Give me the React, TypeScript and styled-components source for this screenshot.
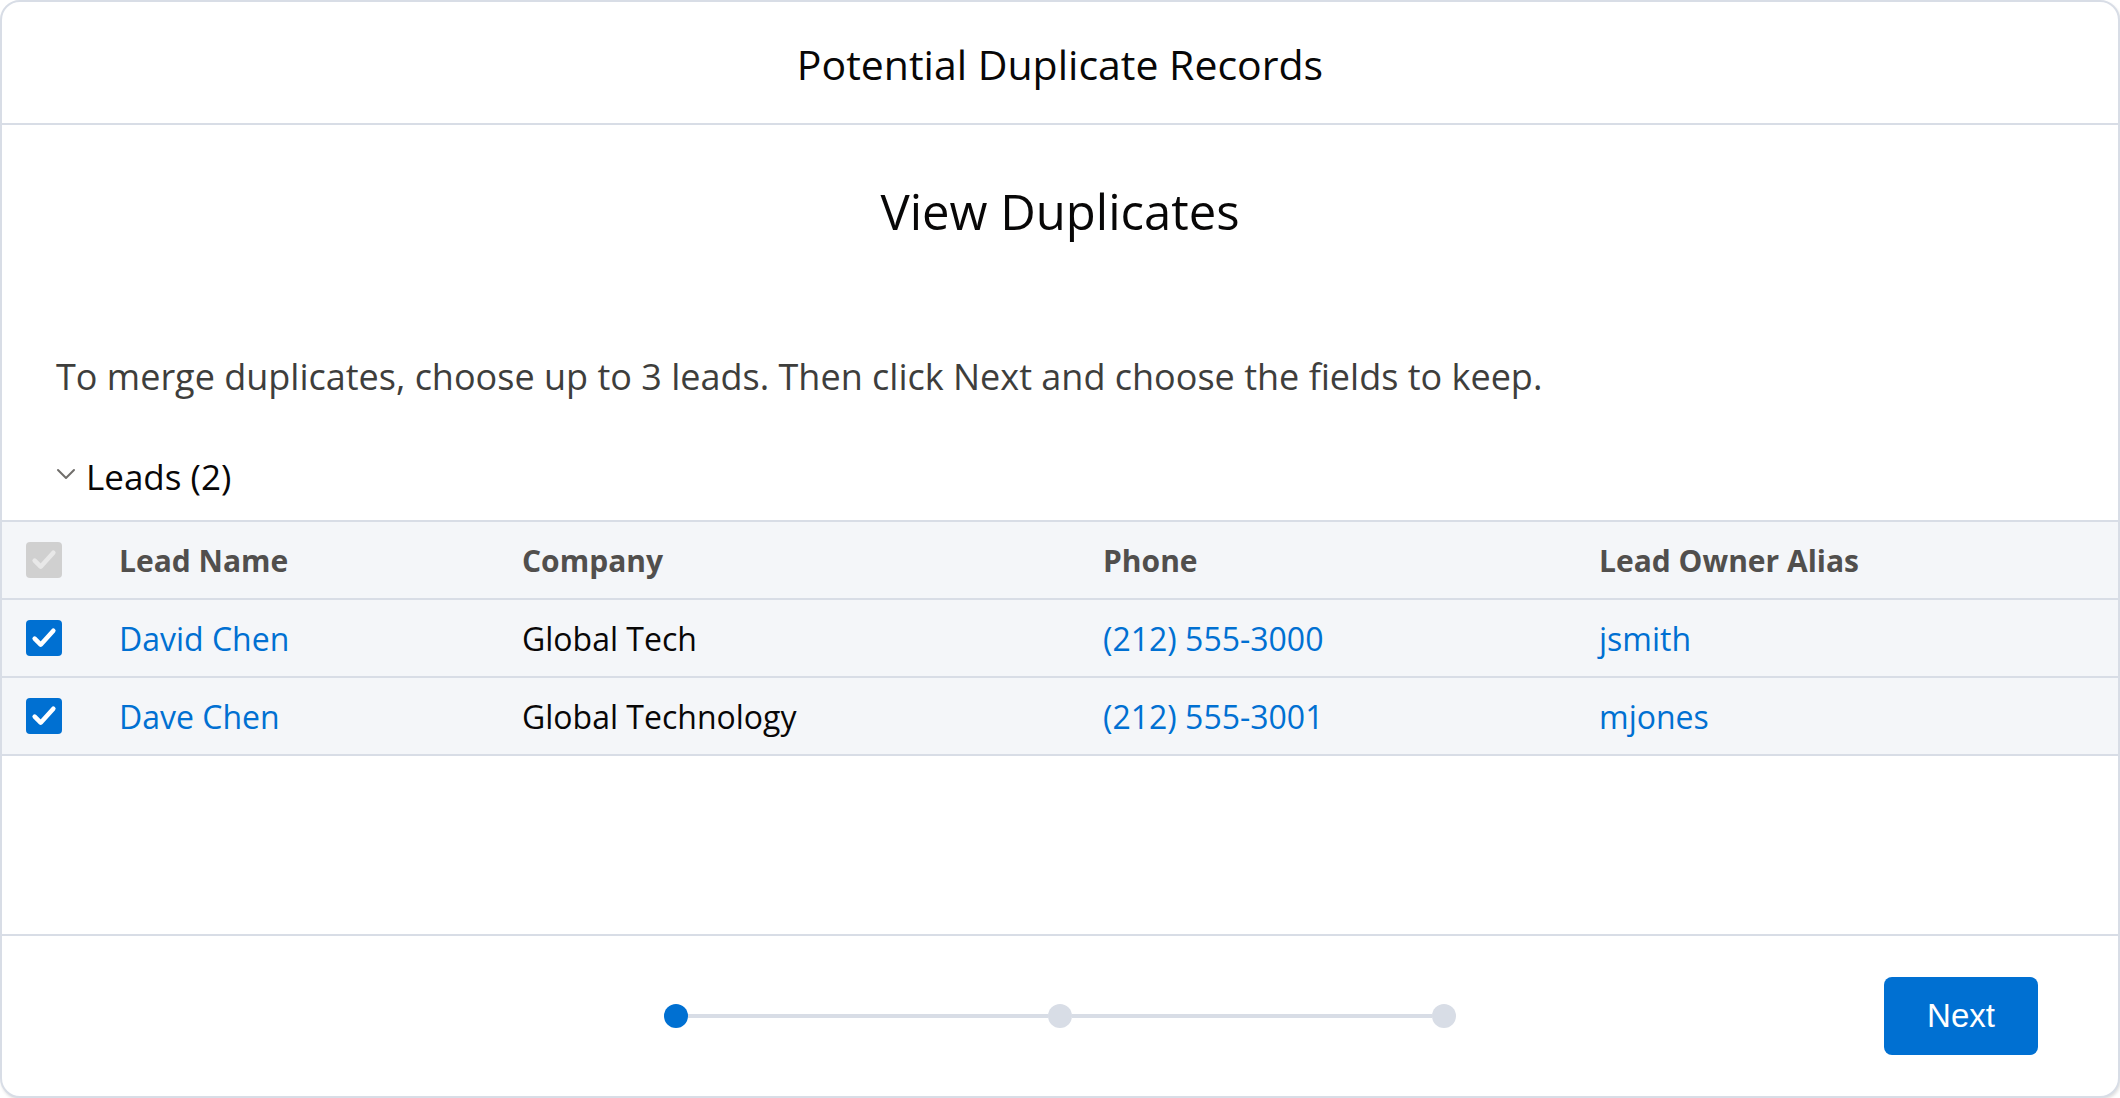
import React, { useState } from "react"
import styled, { createGlobalStyle } from "styled-components"

const Colors = {
  border: "#d8dde6",
  tableBg: "#f4f6f9",
  brand: "#0070d2",
  text: "#080707",
  weak: "#3e3e3c",
  header: "#514f4d",
}

const GlobalStyle = createGlobalStyle`
  html, body {
    margin: 0;
    padding: 0;
    background: #fff;
  }
  body {
    font-family: "Open Sans", "Noto Sans", sans-serif;
    color: ${Colors.text};
  }
  * {
    box-sizing: border-box;
  }
`

type Lead = {
  id: number
  name: string
  company: string
  phone: string
  owner: string
}

const leads: Lead[] = [
  { id: 1, name: "David Chen", company: "Global Tech", phone: "(212) 555-3000", owner: "jsmith" },
  { id: 2, name: "Dave Chen", company: "Global Technology", phone: "(212) 555-3001", owner: "mjones" },
]

const CheckIcon = () => (
  <svg width="24" height="24" viewBox="0 0 24 24" fill="none">
    <path d="M5 12.5l4.5 4.5L19 6.5" stroke="currentColor" strokeWidth="3.4" strokeLinecap="round" strokeLinejoin="round" />
  </svg>
)

const ChevronDown = () => (
  <svg width="20" height="12" viewBox="0 0 20 12" fill="none">
    <path d="M2 2l8 8 8-8" stroke="#706e6b" strokeWidth="2" strokeLinecap="round" strokeLinejoin="round" />
  </svg>
)

const App: React.FC = () => {
  const [selected, setSelected] = useState<number[]>([1, 2])
  const [open, setOpen] = useState(true)

  const toggle = (id: number) => {
    setSelected((prev) => (prev.includes(id) ? prev.filter((x) => x !== id) : [...prev, id]))
  }

  return (
    <>
      <GlobalStyle />
      <S.Card>
        <S.Header>
          <S.Title>Potential Duplicate Records</S.Title>
        </S.Header>
        <S.Body>
          <S.Heading>View Duplicates</S.Heading>
          <S.Description>
            To merge duplicates, choose up to 3 leads. Then click Next and choose the fields to keep.
          </S.Description>
          <S.SectionToggle onClick={() => setOpen(!open)}>
            <ChevronDown />
            <span>Leads (2)</span>
          </S.SectionToggle>
          {open && (
            <S.Table>
              <S.Row>
                <S.CheckCell>
                  <S.Checkbox variant="disabled">
                    <CheckIcon />
                  </S.Checkbox>
                </S.CheckCell>
                <S.HeadCell>Lead Name</S.HeadCell>
                <S.HeadCell>Company</S.HeadCell>
                <S.HeadCell>Phone</S.HeadCell>
                <S.HeadCell>Lead Owner Alias</S.HeadCell>
              </S.Row>
              {leads.map((lead) => (
                <S.Row key={lead.id}>
                  <S.CheckCell>
                    <S.Checkbox
                      variant={selected.includes(lead.id) ? "checked" : "empty"}
                      onClick={() => toggle(lead.id)}
                    >
                      {selected.includes(lead.id) && <CheckIcon />}
                    </S.Checkbox>
                  </S.CheckCell>
                  <S.Cell link>{lead.name}</S.Cell>
                  <S.Cell>{lead.company}</S.Cell>
                  <S.Cell link>{lead.phone}</S.Cell>
                  <S.Cell link>{lead.owner}</S.Cell>
                </S.Row>
              ))}
            </S.Table>
          )}
        </S.Body>
        <S.Footer>
          <S.Progress>
            <S.Dot active />
            <S.Track />
            <S.Dot />
            <S.Track />
            <S.Dot />
          </S.Progress>
          <S.NextButton>Next</S.NextButton>
        </S.Footer>
      </S.Card>
    </>
  )
}

const S = {
  Card: styled.div`
    display: flex;
    flex-direction: column;
    width: 100%;
    height: 100vh;
    border: 2px solid ${Colors.border};
    border-radius: 20px;
    background: #fff;
    box-shadow: 1px 2px 3px rgba(0, 0, 0, 0.12);
    overflow: hidden;
  `,
  Header: styled.div`
    display: flex;
    align-items: center;
    justify-content: center;
    height: 123px;
    flex-shrink: 0;
    padding-top: 4px;
    border-bottom: 2px solid ${Colors.border};
  `,
  Title: styled.h1`
    margin: 0;
    font-size: 41px;
    font-weight: 400;
    line-height: 1.2;
  `,
  Body: styled.div`
    flex: 1;
    display: flex;
    flex-direction: column;
    padding-top: 56px;
  `,
  Heading: styled.h2`
    margin: 0;
    text-align: center;
    font-size: 49px;
    font-weight: 400;
    line-height: 60px;
  `,
  Description: styled.p`
    margin: 112px 0 0;
    padding: 0 54px;
    font-size: 36px;
    line-height: 48px;
    color: ${Colors.weak};
  `,
  SectionToggle: styled.div`
    display: flex;
    align-items: center;
    gap: 10px;
    margin-top: 52px;
    padding: 0 54px;
    height: 48px;
    font-size: 35px;
    line-height: 48px;
    cursor: pointer;
    svg {
      margin-top: -6px;
    }
  `,
  Table: styled.div`
    margin-top: 19px;
    background: ${Colors.tableBg};
    border-top: 2px solid ${Colors.border};
  `,
  Row: styled.div`
    display: grid;
    grid-template-columns: 91px 403px 581px 496px 1fr;
    align-items: center;
    height: 78px;
    border-bottom: 2px solid ${Colors.border};
  `,
  CheckCell: styled.div`
    display: flex;
    align-items: center;
    padding-left: 24px;
  `,
  Checkbox: styled.div<{ variant: "checked" | "empty" | "disabled" }>`
    display: flex;
    align-items: center;
    justify-content: center;
    width: 36px;
    height: 36px;
    border-radius: 4px;
    cursor: pointer;
    color: ${({ variant }) => (variant === "disabled" ? "#e8e8e8" : "#fff")};
    background: ${({ variant }) =>
      variant === "checked" ? Colors.brand : variant === "disabled" ? "#d0d0d0" : "#fff"};
    border: ${({ variant }) => (variant === "empty" ? `2px solid ${Colors.border}` : "none")};
    svg {
      width: 32px;
      height: 32px;
    }
  `,
  HeadCell: styled.div`
    padding-left: 26px;
    font-size: 30px;
    font-weight: 700;
    color: ${Colors.header};
    white-space: nowrap;
  `,
  Cell: styled.div<{ link?: boolean }>`
    padding-left: 26px;
    font-size: 32px;
    color: ${({ link }) => (link ? Colors.brand : Colors.text)};
    white-space: nowrap;
    cursor: ${({ link }) => (link ? "pointer" : "default")};
  `,
  Footer: styled.div`
    display: grid;
    grid-template-columns: 1fr auto 1fr;
    align-items: center;
    height: 162px;
    flex-shrink: 0;
    border-top: 2px solid ${Colors.border};
  `,
  Progress: styled.div`
    grid-column: 2;
    display: flex;
    align-items: center;
    width: 792px;
  `,
  Dot: styled.div<{ active?: boolean }>`
    width: 24px;
    height: 24px;
    flex-shrink: 0;
    border-radius: 50%;
    background: ${({ active }) => (active ? Colors.brand : Colors.border)};
  `,
  Track: styled.div`
    flex: 1;
    height: 4px;
    background: ${Colors.border};
  `,
  NextButton: styled.button`
    grid-column: 3;
    justify-self: end;
    margin-right: 80px;
    width: 154px;
    height: 78px;
    border: none;
    border-radius: 8px;
    background: ${Colors.brand};
    color: #fff;
    font-family: "Liberation Sans", Arial, sans-serif;
    font-size: 33px;
    cursor: pointer;
  `,
}

export default App
